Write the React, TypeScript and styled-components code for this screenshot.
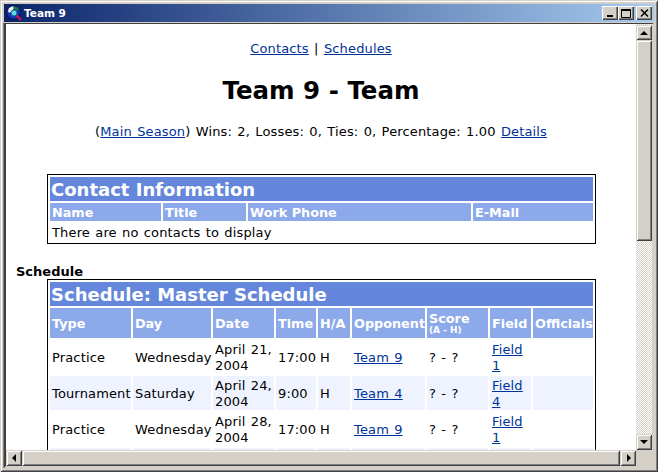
import React from "react";
import styled, { createGlobalStyle } from "styled-components";

const Global = createGlobalStyle`
  html, body { margin: 0; padding: 0; background: #d4d0c8; }
  * { box-sizing: border-box; }
`;

const Window = styled.div`
  width: 658px;
  height: 472px;
  padding: 4px;
  display: flex;
  flex-direction: column;
  overflow: hidden;
  background: #d4d0c8;
  box-shadow: inset 1px 1px 0 #d4d0c8, inset -1px -1px 0 #404040, inset 2px 2px 0 #fff, inset -2px -2px 0 #808080;
`;

const TitleBar = styled.div`
  height: 18px;
  flex: none;
  display: flex;
  align-items: center;
  padding: 0 2px;
  background: linear-gradient(90deg, #0a246a, #a6caf0);
`;

const TitleText = styled.span`
  margin-left: 2px;
  flex: 1;
  color: #fff;
  font: bold 10.5px "DejaVu Sans", sans-serif;
`;

const CaptionButton = styled.div<{ $gap?: number }>`
  width: 16px;
  height: 14px;
  margin-left: ${(p) => p.$gap ?? 0}px;
  display: flex;
  align-items: center;
  justify-content: center;
  background: #d4d0c8;
  box-shadow: inset 1px 1px 0 #fff, inset -1px -1px 0 #404040, inset -2px -2px 0 #808080;
`;

const Frame = styled.div`
  margin-top: 1px;
  width: 650px;
  height: 445px;
  display: grid;
  grid-template-columns: 630px 16px;
  grid-template-rows: 426px 16px;
  border-top: 1px solid #404040;
  border-left: 2px solid #404040;
  border-right: 2px solid #d4d0c8;
  border-bottom: 2px solid #d4d0c8;
  box-shadow: -1px 0 0 #808080;
`;

const Content = styled.div`
  overflow: hidden;
  background: #fff;
  color: #000;
  font: 13px/16px "DejaVu Sans", Verdana, sans-serif;
  letter-spacing: 0.15px;
  word-spacing: 1px;
`;

const Nav = styled.div`
  margin-top: 17px;
  text-align: center;
`;

const Heading = styled.h1`
  margin: 19px 0 0;
  font: bold 24.5px/30px "DejaVu Sans", Verdana, sans-serif;
  letter-spacing: 0;
  word-spacing: 0;
  text-align: center;
`;

const Stats = styled.div`
  margin-top: 18px;
  text-align: center;
`;

const Link = styled.a`
  color: #003399;
  text-decoration: underline;
`;

const DataTable = styled.table<{ $top: number }>`
  width: 549px;
  margin: ${(p) => p.$top}px 0 0 41px;
  table-layout: fixed;
  border: 1px solid #000;
  border-spacing: 2px;
  border-collapse: separate;
`;

const TitleCell = styled.th`
  height: 24px;
  padding: 1px 2px 0 1px;
  background: #6487dc;
  color: #fff;
  font: bold 18px/23px "DejaVu Sans", Verdana, sans-serif;
  letter-spacing: 0;
  word-spacing: 0;
  text-align: left;
  white-space: nowrap;
`;

const HeadCell = styled.th<{ $h: number }>`
  height: ${(p) => p.$h}px;
  padding: 1px 1px 0 2px;
  background: #8ca9e9;
  color: #fff;
  font: bold 12.8px/14px "DejaVu Sans", Verdana, sans-serif;
  letter-spacing: 0;
  word-spacing: 0;
  text-align: left;
  vertical-align: middle;
  overflow: hidden;
  white-space: nowrap;
`;

const ScoreSub = styled.div`
  font-size: 9px;
  line-height: 9px;
`;

const Cell = styled.td<{ $alt?: boolean }>`
  height: 34px;
  padding: 2px 2px 0;
  background: ${(p) => (p.$alt ? "#eef3ff" : "#fff")};
  vertical-align: middle;
`;

const PlainCell = styled.td`
  height: 18px;
  padding: 2px 2px 0;
`;

const SectionLabel = styled.div`
  margin: 20px 0 0 10px;
  font-weight: bold;
  line-height: 15px;
  letter-spacing: 0;
`;

const VScroll = styled.div`
  display: flex;
  flex-direction: column;
  padding-top: 1px;
  background: conic-gradient(#d4d0c8 25%, #fff 0 50%, #d4d0c8 0 75%, #fff 0) 0 0 / 2px 2px;
`;

const HScroll = styled.div`
  display: flex;
  background: #d4d0c8;
`;

const Corner = styled.div`
  background: #d4d0c8;
`;

const ScrollPiece = styled.div<{ $w?: number; $h?: number; $grow?: boolean }>`
  flex: ${(p) => (p.$grow ? "1" : "none")};
  width: ${(p) => (p.$w ? `${p.$w}px` : "auto")};
  height: ${(p) => (p.$h ? `${p.$h}px` : "auto")};
  display: flex;
  align-items: center;
  justify-content: center;
  background: #d4d0c8;
  box-shadow: inset 1px 1px 0 #d4d0c8, inset -1px -1px 0 #404040, inset 2px 2px 0 #fff, inset -2px -2px 0 #808080;
`;

const Track = styled.div`
  flex: 1;
`;

const Arrow = ({ d }: { d: "up" | "down" | "left" | "right" }) => {
  const pts = {
    up: "4,1 8,5 0,5",
    down: "0,1 8,1 4,5",
    left: "5,0 5,8 1,4",
    right: "2,0 2,8 6,4",
  }[d];
  const vertical = d === "up" || d === "down";
  return (
    <svg width={vertical ? 8 : 7} height={vertical ? 6 : 8} viewBox={vertical ? "0 0 8 6" : "0 0 7 8"}>
      <polygon points={pts} fill="#000" />
    </svg>
  );
};

const GlobeIcon = () => (
  <svg width="16" height="16" viewBox="0 0 16 16">
    <circle cx="7.5" cy="7.5" r="7" fill="#1430b8" stroke="#0c1040" strokeWidth="1" />
    <path d="M2 6 L3 3 L7 1 L8 3 L6 6 L3 8 Z" fill="#ececec" />
    <path d="M7 1 L12 2.5 L13 5 L10 5 L8 4 Z" fill="#108038" />
    <circle cx="8" cy="8" r="3" fill="#58d8e8" stroke="#1c6470" strokeWidth="1" />
    <path d="M10.5 10.5 L15 15" stroke="#e01048" strokeWidth="2" />
  </svg>
);

const contactCols = [111, 83, 223, 120];
const scheduleCols = [81, 78, 61, 40, 32, 73, 61, 41, 60];

const rows = [
  ["Practice", "Wednesday", "April 21, 2004", "17:00", "H", "Team 9", "? - ?", "Field 1"],
  ["Tournament", "Saturday", "April 24, 2004", "9:00", "H", "Team 4", "? - ?", "Field 4"],
  ["Practice", "Wednesday", "April 28, 2004", "17:00", "H", "Team 9", "? - ?", "Field 1"],
];

export default function App() {
  return (
    <Window>
      <Global />
      <TitleBar>
        <GlobeIcon />
        <TitleText>Team 9</TitleText>
        <CaptionButton>
          <svg width="8" height="8" viewBox="0 0 8 8"><rect x="1" y="6" width="6" height="2" fill="#000" /></svg>
        </CaptionButton>
        <CaptionButton>
          <svg width="10" height="9" viewBox="0 0 10 9"><path d="M0.5 1.5H9.5V8.5H0.5Z" fill="none" stroke="#000" /><rect y="0" width="10" height="2" fill="#000" /></svg>
        </CaptionButton>
        <CaptionButton $gap={2}>
          <svg width="9" height="8" viewBox="0 0 9 8"><path d="M1 0.5L8 7.5M8 0.5L1 7.5" stroke="#000" strokeWidth="1.5" /></svg>
        </CaptionButton>
      </TitleBar>
      <Frame>
        <Content>
          <Nav>
            <Link>Contacts</Link> | <Link>Schedules</Link>
          </Nav>
          <Heading>Team 9 - Team</Heading>
          <Stats>
            (<Link>Main Season</Link>) Wins: 2, Losses: 0, Ties: 0, Percentage: 1.00 <Link>Details</Link>
          </Stats>
          <DataTable $top={34}>
            <colgroup>
              {contactCols.map((w, i) => <col key={i} width={w} />)}
            </colgroup>
            <thead>
              <tr><TitleCell colSpan={4}>Contact Information</TitleCell></tr>
              <tr>
                {["Name", "Title", "Work Phone", "E-Mail"].map((h) => <HeadCell key={h} $h={18}>{h}</HeadCell>)}
              </tr>
            </thead>
            <tbody>
              <tr><PlainCell colSpan={4}>There are no contacts to display</PlainCell></tr>
            </tbody>
          </DataTable>
          <SectionLabel>Schedule</SectionLabel>
          <DataTable $top={0}>
            <colgroup>
              {scheduleCols.map((w, i) => <col key={i} width={w} />)}
            </colgroup>
            <thead>
              <tr><TitleCell colSpan={9}>Schedule: Master Schedule</TitleCell></tr>
              <tr>
                {["Type", "Day", "Date", "Time", "H/A", "Opponent"].map((h) => <HeadCell key={h} $h={30}>{h}</HeadCell>)}
                <HeadCell $h={30}>Score<ScoreSub>(A - H)</ScoreSub></HeadCell>
                <HeadCell $h={30}>Field</HeadCell>
                <HeadCell $h={30}>Officials</HeadCell>
              </tr>
            </thead>
            <tbody>
              {rows.map((r, i) => (
                <tr key={i}>
                  {r.slice(0, 5).map((c, j) => <Cell key={j} $alt={i % 2 === 1}>{c}</Cell>)}
                  <Cell $alt={i % 2 === 1}><Link>{r[5]}</Link></Cell>
                  <Cell $alt={i % 2 === 1}>{r[6]}</Cell>
                  <Cell $alt={i % 2 === 1}><Link>{r[7]}</Link></Cell>
                  <Cell $alt={i % 2 === 1} />
                </tr>
              ))}
              <tr>
                {scheduleCols.map((_, i) => <Cell key={i} $alt />)}
              </tr>
            </tbody>
          </DataTable>
        </Content>
        <VScroll>
          <ScrollPiece $h={15}><Arrow d="up" /></ScrollPiece>
          <ScrollPiece $h={201} />
          <Track />
          <ScrollPiece $h={16}><Arrow d="down" /></ScrollPiece>
        </VScroll>
        <HScroll>
          <ScrollPiece $w={16}><Arrow d="left" /></ScrollPiece>
          <ScrollPiece $grow />
          <ScrollPiece $w={16}><Arrow d="right" /></ScrollPiece>
        </HScroll>
        <Corner />
      </Frame>
    </Window>
  );
}
